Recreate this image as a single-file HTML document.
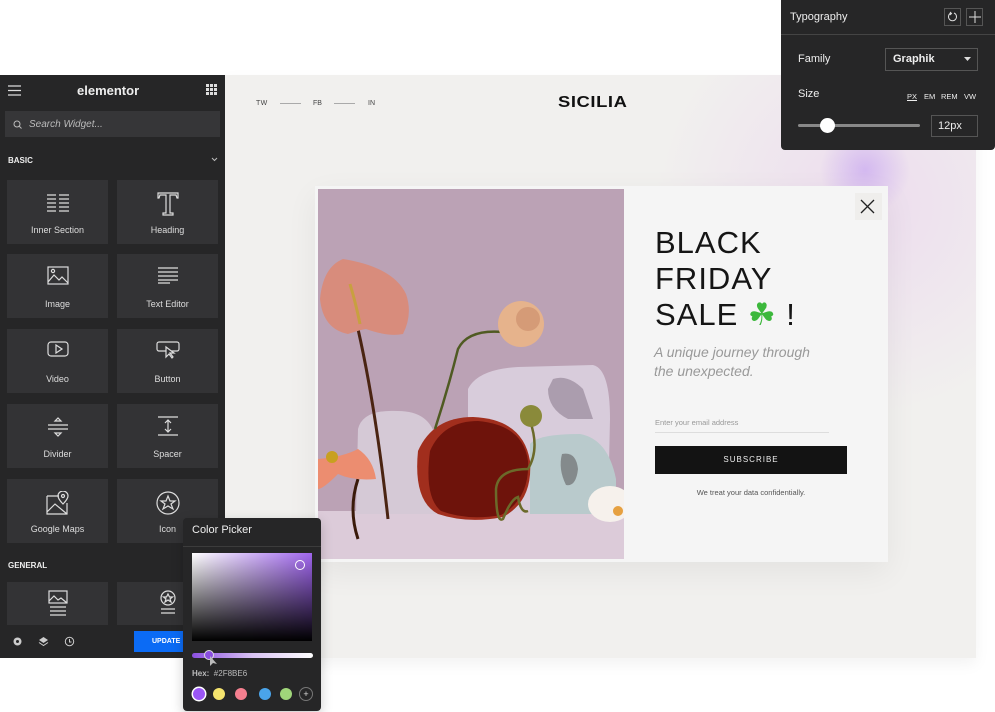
<!DOCTYPE html>
<html><head><meta charset="utf-8"><style>
*{box-sizing:border-box;margin:0;padding:0}
body{width:995px;height:712px;background:#fff;position:relative;overflow:hidden;font-family:"Liberation Sans",sans-serif}
.abs{position:absolute}
#canvas{left:225px;top:75px;width:751px;height:583px;background:#f1f0ee;overflow:hidden;box-shadow:0 6px 14px rgba(0,0,0,.05)}
#glow{left:430px;top:-80px;width:420px;height:420px;border-radius:50%;background:radial-gradient(closest-side,rgba(236,218,238,.9),rgba(241,240,238,0))}
#glow2{left:595px;top:50px;width:90px;height:90px;border-radius:50%;background:radial-gradient(closest-side,rgba(205,175,240,.8),rgba(220,200,240,0))}
#panel{left:0;top:75px;width:225px;height:583px;background:#262627;color:#e8e8e8}
.tile{position:absolute;background:#333335;width:101px;height:64px;color:#ddd;font-size:9px;text-align:center}
.tile span{position:absolute;left:0;right:0;bottom:9px}
.tile svg{position:absolute;left:50%;top:12px;transform:translateX(-50%)}
.dark{background:#262627;color:#eee}
</style></head><body>

<div id="canvas" class="abs">
  <div id="glow" class="abs"></div>
  <div id="glow2" class="abs"></div>
  <div class="abs" style="left:31px;top:25px;font-size:7px;color:#444;letter-spacing:.3px">TW</div>
  <div class="abs" style="left:55px;top:28px;width:21px;height:1px;background:#aaa"></div>
  <div class="abs" style="left:88px;top:25px;font-size:7px;color:#444">FB</div>
  <div class="abs" style="left:109px;top:28px;width:21px;height:1px;background:#aaa"></div>
  <div class="abs" style="left:143px;top:25px;font-size:7px;color:#444">IN</div>
  <div class="abs" style="left:333px;top:19px;font-size:16px;font-weight:900;color:#111;letter-spacing:.5px;transform:scaleX(1.15);transform-origin:left">SICILIA</div>
</div>

<!-- popup -->
<div class="abs" style="left:315px;top:186px;width:573px;height:376px;background:#f5f5f5;box-shadow:0 10px 30px rgba(0,0,0,.06)"></div>
<svg class="abs" style="left:318px;top:189px" width="306" height="370" viewBox="0 0 306 370">
  <rect width="306" height="370" fill="#bba2b5"/>
  <rect y="322" width="306" height="48" fill="#dccbd9"/>
  <path d="M150 200 Q160 180 200 178 L275 176 Q292 180 292 230 L290 320 L150 325 Z" fill="#d8ccdb"/>
  <path d="M235 190 Q250 185 265 200 L275 230 L250 230 Q230 220 230 200Z" fill="#8e7d8f" opacity=".6"/>
  <path d="M40 240 Q45 220 80 222 Q112 222 118 250 L118 325 L38 325 Z" fill="#d5c9d6"/>
  <path d="M212 255 Q220 245 262 245 Q290 250 298 290 L298 325 L212 325Z" fill="#b9cacc"/>
  <path d="M244 265 Q258 262 260 280 Q258 298 248 296 Q240 280 244 265Z" fill="#6e6f70" opacity=".7"/>
  <path d="M100 262 Q115 228 155 228 Q205 230 212 272 Q215 312 185 328 Q150 335 120 325 Q95 312 100 262Z" fill="#a12e1d"/>
  <path d="M112 262 Q125 232 160 232 Q205 236 210 272 Q212 310 183 326 Q150 332 123 322 Q106 308 112 262Z" fill="#6e130b"/>
  <path d="M212 232 Q222 260 210 280 Q180 280 178 300 Q178 335 185 330 Q193 310 200 308 Q203 325 210 322" stroke="#6b6a2a" stroke-width="2.5" fill="none"/>
  <circle cx="213" cy="227" r="11" fill="#8a8a3a"/>
  <path d="M40 140 Q58 220 70 330" stroke="#4a2412" stroke-width="3" fill="none"/>
  <path d="M25 70 Q5 78 2 110 Q5 140 30 145 Q45 140 48 140 Q70 148 85 145 Q95 125 88 105 Q75 78 25 70Z" fill="#d88c7c"/>
  <path d="M32 95 Q38 115 42 135" stroke="#c8a040" stroke-width="3" fill="none"/>
  <path d="M117 240 Q130 200 140 160 Q150 140 185 143" stroke="#4f5a22" stroke-width="2.5" fill="none"/>
  <circle cx="203" cy="135" r="23" fill="#e6b38c"/>
  <circle cx="210" cy="130" r="12" fill="#d59b77"/>
  <path d="M40 350 Q30 320 40 290" stroke="#3a1a0a" stroke-width="3" fill="none"/>
  <path d="M0 270 Q25 268 40 260 Q55 270 58 290 Q35 292 20 285 Q5 300 0 300Z" fill="#ec8d70"/>
  <circle cx="14" cy="268" r="6" fill="#c8a020"/>
  <ellipse cx="292" cy="315" rx="22" ry="18" fill="#f6f1ec"/>
  <circle cx="300" cy="322" r="5" fill="#e6a040"/>
</svg>
<div class="abs" style="left:855px;top:193px;width:27px;height:27px;background:#efeeec"></div>
<svg class="abs" style="left:860px;top:199px" width="15" height="15"><path d="M1 1L14 14M14 1L1 14" stroke="#222" stroke-width="1.3"/></svg>
<div class="abs" style="left:655px;top:225px;font-family:'Liberation Sans',sans-serif;font-size:31px;line-height:36px;color:#151515;letter-spacing:1px">BLACK<br>FRIDAY<br>SALE <span style="color:#3cb83c">☘</span> !</div>
<div class="abs" style="left:654px;top:343px;font-family:'Liberation Sans',sans-serif;font-style:italic;font-size:14px;line-height:19px;color:#999">A unique journey through<br>the unexpected.</div>
<div class="abs" style="left:655px;top:418px;font-size:7.5px;color:#999">Enter your email address</div>
<div class="abs" style="left:655px;top:432px;width:174px;height:1px;background:#ddd"></div>
<div class="abs" style="left:655px;top:446px;width:192px;height:28px;background:#131313;color:#eee;font-size:8px;letter-spacing:1px;text-align:center;line-height:28px">SUBSCRIBE</div>
<div class="abs" style="left:655px;top:488px;width:192px;text-align:center;font-size:7.5px;color:#555">We treat your data confidentially.</div>

<!-- left panel -->
<div id="panel" class="abs">
  <svg class="abs" style="left:8px;top:10px" width="14" height="11"><path d="M0 1h13M0 5.5h13M0 10h13" stroke="#ddd" stroke-width="1.3"/></svg>
  <div class="abs" style="left:77px;top:8px;font-size:13px;font-weight:bold;color:#eee">elementor</div>
  <svg class="abs" style="left:206px;top:9px" width="11" height="11" fill="#ddd"><rect x="0" y="0" width="3" height="3"/><rect x="4" y="0" width="3" height="3"/><rect x="8" y="0" width="3" height="3"/><rect x="0" y="4" width="3" height="3"/><rect x="4" y="4" width="3" height="3"/><rect x="8" y="4" width="3" height="3"/><rect x="0" y="8" width="3" height="3"/><rect x="4" y="8" width="3" height="3"/><rect x="8" y="8" width="3" height="3"/></svg>
  <div class="abs" style="left:5px;top:36px;width:215px;height:26px;background:#363638"></div>
  <svg class="abs" style="left:13px;top:45px" width="9" height="9"><circle cx="4" cy="4" r="3" stroke="#bbb" fill="none"/><path d="M6 6l2.5 2.5" stroke="#bbb"/></svg>
  <div class="abs" style="left:29px;top:44px;font-size:10px;font-style:italic;color:#bbb">Search Widget...</div>
  <div class="abs" style="left:8px;top:81px;font-size:8px;font-weight:bold;color:#eee">BASIC</div>
  <svg class="abs" style="left:211px;top:82px" width="7" height="5"><path d="M1 1l2.5 2.5L6 1" stroke="#bbb" fill="none"/></svg>
  <div class="abs" style="left:8px;top:486px;font-size:8px;font-weight:bold;color:#eee">GENERAL</div>

  <div class="tile" style="left:7px;top:105px"><svg width="24" height="20" stroke="#ddd" stroke-width="1.3"><path d="M1 3h9M1 7h9M1 11h9M1 15h9M1 19h9M13 3h10M13 7h10M13 11h10M13 15h10M13 19h10"/></svg><span>Inner Section</span></div>
  <div class="tile" style="left:117px;top:105px"><svg width="22" height="24" stroke="#ddd" fill="none" stroke-width="1.2"><path d="M1 1h20v5h-1l-1-3h-6v18h3v2H6v-2h3V3H3L2 6H1z"/></svg><span>Heading</span></div>
  <div class="tile" style="left:7px;top:179px"><svg width="22" height="20" stroke="#ddd" fill="none" stroke-width="1.2"><rect x="1" y="1" width="20" height="17"/><path d="M1 16l6-7 5 5 3-3 6 6"/><circle cx="6" cy="5" r="1.6"/></svg><span>Image</span></div>
  <div class="tile" style="left:117px;top:179px"><svg width="24" height="18" stroke="#ddd" stroke-width="1.2"><path d="M2 2h20M2 6h20M2 10h20M2 14h20M2 17h12"/></svg><span>Text Editor</span></div>
  <div class="tile" style="left:7px;top:254px"><svg width="22" height="16" stroke="#ddd" fill="none" stroke-width="1.2"><rect x="1" y="1" width="20" height="14" rx="3"/><path d="M9 4v8l6-4z"/></svg><span>Video</span></div>
  <div class="tile" style="left:117px;top:254px"><svg width="24" height="18" stroke="#ddd" fill="none" stroke-width="1.2"><rect x="1" y="1" width="22" height="9" rx="2"/><path d="M10 6v10l3-3 3 4 1-1-3-4h4z" fill="#333335"/></svg><span>Button</span></div>
  <div class="tile" style="left:7px;top:329px"><svg width="22" height="22" stroke="#ddd" fill="none" stroke-width="1.2"><path d="M8 5l3-3 3 3zM1 9h20M1 13h20M8 17l3 3 3-3z"/></svg><span>Divider</span></div>
  <div class="tile" style="left:117px;top:329px"><svg width="22" height="20" stroke="#ddd" fill="none" stroke-width="1.2"><path d="M1 1h20M1 19h20M11 4v12M8 7l3-3 3 3M8 13l3 3 3-3"/></svg><span>Spacer</span></div>
  <div class="tile" style="left:7px;top:404px"><svg width="24" height="24" stroke="#ddd" fill="none" stroke-width="1.2"><path d="M1 5h12M1 5v18h20V12M1 21l8-8 12 10"/><path d="M17 13s-5-5-5-8a5 5 0 0110 0c0 3-5 8-5 8z"/><circle cx="17" cy="5" r="1.5"/></svg><span>Google Maps</span></div>
  <div class="tile" style="left:117px;top:404px"><svg width="24" height="24" stroke="#ddd" fill="none" stroke-width="1.2"><circle cx="12" cy="12" r="11"/><path d="M12 5l2 5h5l-4 3 2 5-5-3-5 3 2-5-4-3h5z"/></svg><span>Icon</span></div>
  <div class="tile" style="left:7px;top:507px;height:43px"><svg width="20" height="26" stroke="#ddd" fill="none" stroke-width="1.2" style="top:8px"><rect x="1" y="1" width="18" height="12"/><path d="M1 11l5-5 4 4 3-2 6 5M2 17h16M2 21h16M2 25h16"/></svg></div>
  <div class="tile" style="left:117px;top:507px;height:43px"><svg width="20" height="26" stroke="#ddd" fill="none" stroke-width="1.2" style="top:8px"><circle cx="10" cy="8" r="7"/><path d="M10 4l1.5 3h3l-2.5 2 1 3-3-2-3 2 1-3-2.5-2h3zM3 19h14M3 23h14"/></svg></div>

  <svg class="abs" style="left:12px;top:561px" width="11" height="11"><circle cx="5.5" cy="5.5" r="4" fill="#ccc"/><circle cx="5.5" cy="5.5" r="1.5" fill="#262627"/></svg>
  <svg class="abs" style="left:38px;top:561px" width="11" height="11"><path d="M5.5 1L10 4 5.5 7 1 4z" fill="#ccc"/><path d="M1 6.5l4.5 3 4.5-3" stroke="#ccc" fill="none"/></svg>
  <svg class="abs" style="left:64px;top:561px" width="11" height="11"><circle cx="5.5" cy="5.5" r="4.2" stroke="#ccc" fill="none"/><path d="M5.5 3v3h2" stroke="#ccc" fill="none"/></svg>
  <div class="abs" style="left:134px;top:556px;width:91px;height:21px;background:#0b6bf5;color:#fff;font-size:7px;font-weight:bold;line-height:21px;padding-left:18px">UPDATE</div>
</div>

<!-- typography -->
<div class="abs dark" style="left:781px;top:0;width:214px;height:150px;border-radius:0 0 4px 4px">
  <div class="abs" style="left:9px;top:11px;font-size:11px">Typography</div>
  <div class="abs" style="left:163px;top:8px;width:17px;height:18px;border:1px solid #555"></div>
  <svg class="abs" style="left:166px;top:11px" width="11" height="12"><path d="M4 2a4 4 0 103 0" stroke="#ddd" fill="none"/><path d="M3 1l1.5 1.5L3 4" stroke="#ddd" fill="none"/></svg>
  <div class="abs" style="left:185px;top:8px;width:17px;height:18px;border:1px solid #555"></div>
  <svg class="abs" style="left:188px;top:11px" width="12" height="12"><path d="M6 0v12M0 6h12" stroke="#ddd"/></svg>
  <div class="abs" style="left:0;top:34px;width:214px;height:1px;background:#444"></div>
  <div class="abs" style="left:17px;top:53px;font-size:11px">Family</div>
  <div class="abs" style="left:104px;top:48px;width:93px;height:23px;border:1px solid #555;font-size:11px;font-weight:bold;padding:4px 0 0 7px">Graphik</div>
  <svg class="abs" style="left:183px;top:57px" width="7" height="4"><path d="M0 0h7L3.5 4z" fill="#ddd"/></svg>
  <div class="abs" style="left:17px;top:88px;font-size:11px">Size</div>
  <div class="abs" style="left:126px;top:92px;font-size:7.5px;text-decoration:underline">PX</div>
  <div class="abs" style="left:143px;top:92px;font-size:7.5px">EM</div>
  <div class="abs" style="left:160px;top:92px;font-size:7.5px">REM</div>
  <div class="abs" style="left:183px;top:92px;font-size:7.5px">VW</div>
  <div class="abs" style="left:17px;top:124px;width:122px;height:3px;background:#888;border-radius:2px"></div>
  <div class="abs" style="left:39px;top:118px;width:15px;height:15px;border-radius:50%;background:#fff"></div>
  <div class="abs" style="left:150px;top:115px;width:47px;height:22px;border:1px solid #555;font-size:11px;padding:4px 0 0 6px">12px</div>
</div>

<!-- color picker -->
<div class="abs dark" style="left:183px;top:518px;width:138px;height:193px;border-radius:4px;box-shadow:0 4px 12px rgba(0,0,0,.2)">
  <div class="abs" style="left:9px;top:6px;font-size:11px">Color Picker</div>
  <div class="abs" style="left:0;top:28px;width:138px;height:1px;background:#3c3c3c"></div>
  <div class="abs" style="left:9px;top:35px;width:120px;height:88px;background:linear-gradient(to bottom,rgba(0,0,0,0),#000),linear-gradient(to right,#fff,#a066ee)"></div>
  <div class="abs" style="left:112px;top:42px;width:10px;height:10px;border:1.2px solid #fff;border-radius:50%"></div>
  <div class="abs" style="left:9px;top:135px;width:121px;height:5px;border-radius:3px;background:linear-gradient(to right,#8b4fe0,#d9c3f3,#fff)"></div>
  <div class="abs" style="left:21px;top:132px;width:10px;height:10px;border-radius:50%;background:#8b4fe0;border:1.5px solid #ddd"></div>
  <svg class="abs" style="left:26px;top:137px" width="10" height="12"><path d="M1 1v10l3-3 4 1z" fill="#bbb"/></svg>
  <div class="abs" style="left:9px;top:151px;font-size:8px;color:#bbb"><b>Hex:</b>&nbsp; #2F8BE6</div>
  <div class="abs" style="left:10px;top:170px;width:12px;height:12px;border-radius:50%;background:#9a55f5;box-shadow:0 0 0 1.5px #fff"></div>
  <div class="abs" style="left:30px;top:170px;width:12px;height:12px;border-radius:50%;background:#f5e46e"></div>
  <div class="abs" style="left:52px;top:170px;width:12px;height:12px;border-radius:50%;background:#f57f8f"></div>
  <div class="abs" style="left:76px;top:170px;width:12px;height:12px;border-radius:50%;background:#4aa4ea"></div>
  <div class="abs" style="left:97px;top:170px;width:12px;height:12px;border-radius:50%;background:#a0d67a"></div>
  <div class="abs" style="left:116px;top:169px;width:14px;height:14px;border-radius:50%;border:1px solid #777;color:#ddd;font-size:9px;text-align:center;line-height:12px">+</div>
</div>
</body></html>
